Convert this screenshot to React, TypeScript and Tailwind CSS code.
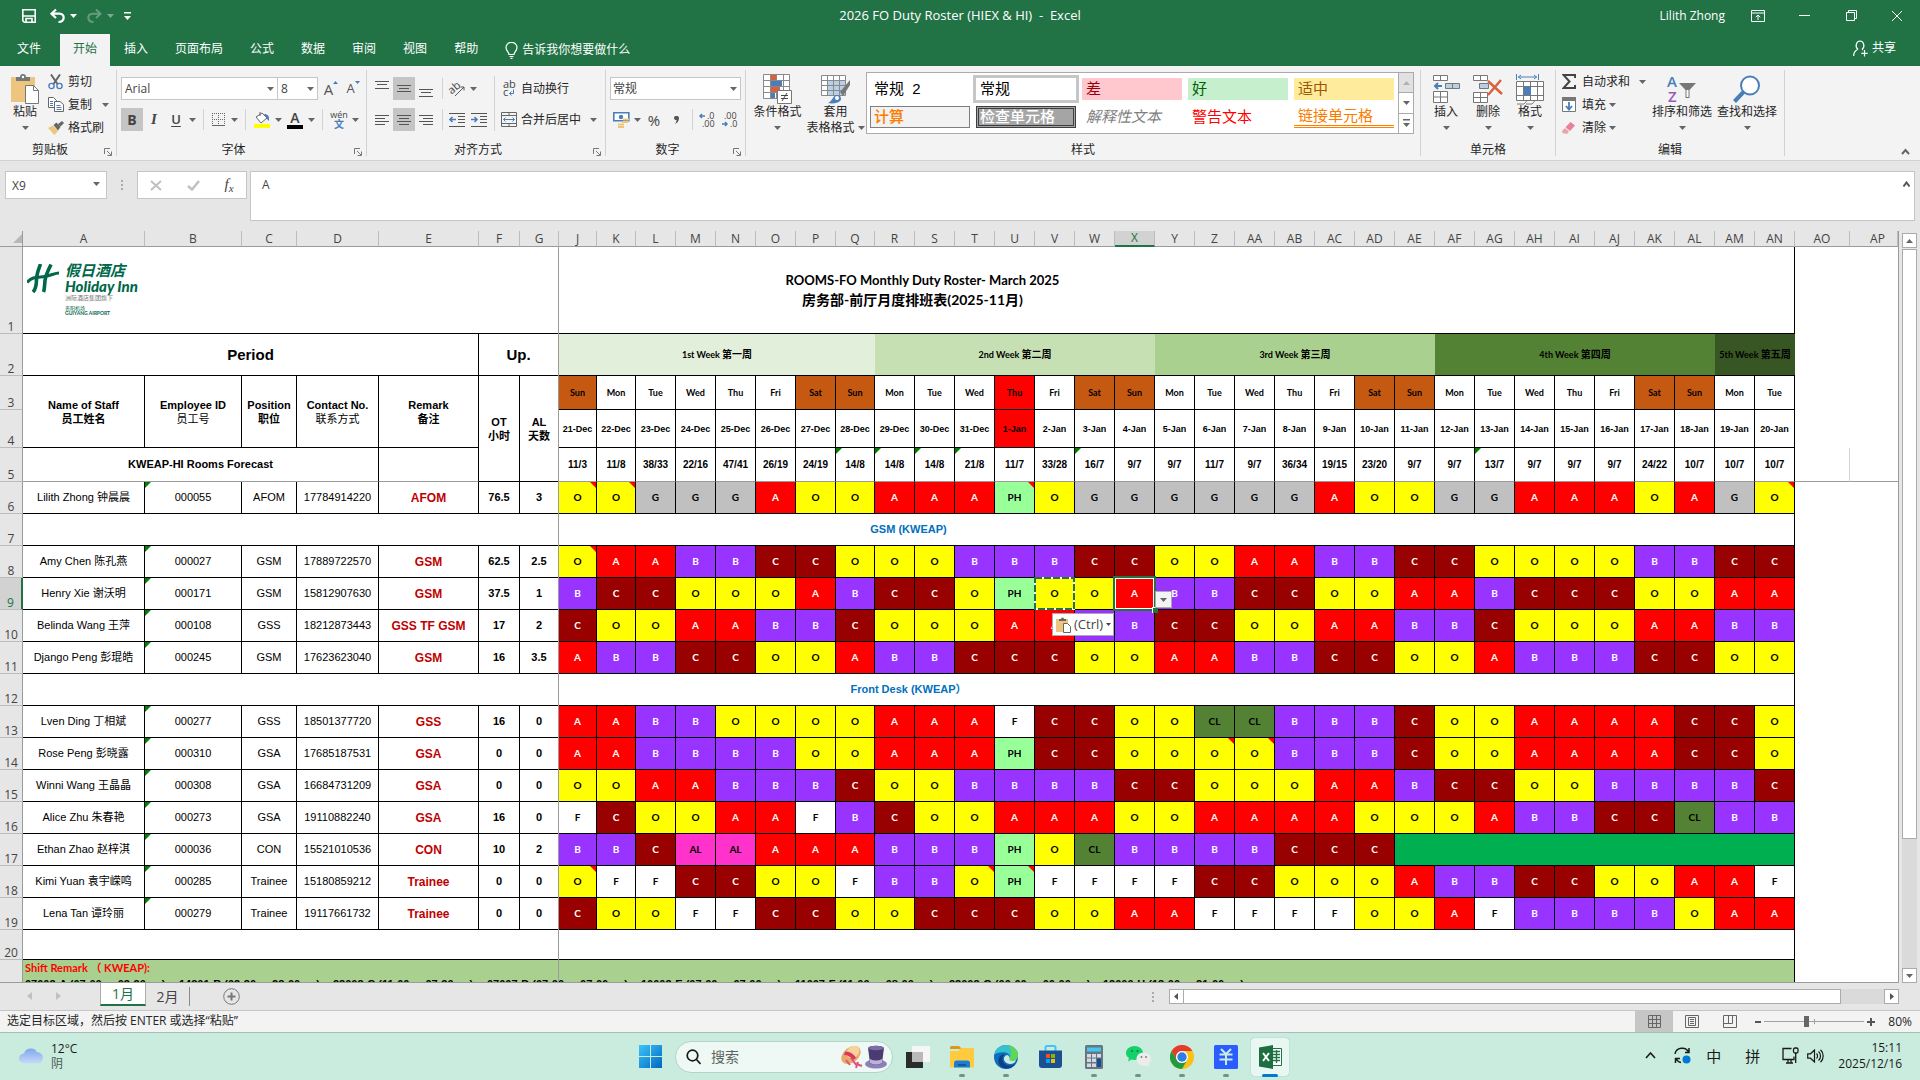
import { useState } from "react";
import type { ReactNode } from "react";
import clsx from "clsx";

const SHIFT_STYLES: Record<string, string> = {
    A: "bg-[#ff0000] text-white",
    B: "bg-[#9933ff] text-white",
    C: "bg-[#990000] text-white",
    O: "bg-[#ffff00] text-black",
    G: "bg-[#c0c0c0] text-black",
    F: "bg-white text-black",
    PH: "bg-[#99ff99] text-black",
    AL: "bg-[#ff33cc] text-black",
    CL: "bg-[#548235] text-black",
};

const LETTERS = "A B C D E F G J K L M N O P Q R S T U V W X Y Z AA AB AC AD AE AF AG AH AI AJ AK AL AM AN AO AP".split(" ");
const DAY_COLUMNS = LETTERS.slice(7, 38);

const STAFF_COLUMN_WIDTHS = ["w-[122px]", "w-[97px]", "w-[55px]", "w-[82px]", "w-[100px]", "w-[41px]", "w-[39px]"];

const WEEKDAYS = ["Sun", "Mon", "Tue", "Wed", "Thu", "Fri", "Sat"];

const WEEKS = [
    { en: "1st Week", zh: "第一周", span: 8, color: "bg-[#e2efda]" },
    { en: "2nd Week", zh: "第二周", span: 7, color: "bg-[#c6e0b4]" },
    { en: "3rd Week", zh: "第三周", span: 7, color: "bg-[#a9d08e]" },
    { en: "4th Week", zh: "第四周", span: 7, color: "bg-[#548235]" },
    { en: "5th Week", zh: "第五周", span: 2, color: "bg-[#375623]" },
];

const FORECAST =
    "11/3 11/8 38/33 22/16 47/41 26/19 24/19 14/8 14/8 14/8 21/8 11/7 33/28 16/7 9/7 9/7 11/7 9/7 36/34 19/15 23/20 9/7 9/7 13/7 9/7 9/7 9/7 24/22 10/7 10/7 10/7".split(" ");
const FORECAST_FLAGS = ["Q", "R", "S", "T", "W", "AG"];

interface Staff {
    row: number;
    name: string;
    id: string;
    position: string;
    phone: string;
    remark: string;
    ot: string;
    al: string;
    shifts: string;
    notes?: string[];
}

const MANAGER: Staff[] = [
    { row: 6, name: "Lilith Zhong 钟晨晨", id: "000055", position: "AFOM", phone: "17784914220", remark: "AFOM", ot: "76.5", al: "3", shifts: "O O G G G A O O A A A PH O G G G G G G A O O G G A A A O A G O", notes: ["J", "K", "U", "AN"] },
];

const GSM_TEAM: Staff[] = [
    { row: 8, name: "Amy Chen 陈孔燕", id: "000027", position: "GSM", phone: "17889722570", remark: "GSM", ot: "62.5", al: "2.5", shifts: "O A A B B C C O O O B B B C C O O A A B B C C O O O O B B C C", notes: ["J"] },
    { row: 9, name: "Henry Xie 谢沃明", id: "000171", position: "GSM", phone: "15812907630", remark: "GSM", ot: "37.5", al: "1", shifts: "B C C O O O A B C C O PH O O A B B C C O O A A B C C C O O A A" },
    { row: 10, name: "Belinda Wang 王萍", id: "000108", position: "GSS", phone: "18212873443", remark: "GSS TF GSM", ot: "17", al: "2", shifts: "C O O A A B B C O O O A A B B C C O O A A B B C O O O A A B B" },
    { row: 11, name: "Django Peng 彭琨皓", id: "000245", position: "GSM", phone: "17623623040", remark: "GSM", ot: "16", al: "3.5", shifts: "A B B C C O O A B B C C C O O A A B B C C O O A B B B C C O O" },
];

const FRONT_DESK: Staff[] = [
    { row: 13, name: "Lven Ding 丁相斌", id: "000277", position: "GSS", phone: "18501377720", remark: "GSS", ot: "16", al: "0", shifts: "A A B B O O O O A A A F C C O O CL CL B B B C O O A A A A C C O" },
    { row: 14, name: "Rose Peng 彭晓露", id: "000310", position: "GSA", phone: "17685187531", remark: "GSA", ot: "0", al: "0", shifts: "A A B B B B O O A A A PH C C O O O O B B B C O O A A A A C C O", notes: ["Z", "AA"] },
    { row: 15, name: "Winni Wang 王晶晶", id: "000308", position: "GSA", phone: "16684731209", remark: "GSA", ot: "0", al: "0", shifts: "O O A A B B B C O O B B B B C C O O O A A B C C O O B B B B C" },
    { row: 16, name: "Alice Zhu 朱春艳", id: "000273", position: "GSA", phone: "19110882240", remark: "GSA", ot: "16", al: "0", shifts: "F C O O A A F B C O O A A A O O A A A A O O O A B B C C CL B B" },
    { row: 17, name: "Ethan Zhao 赵梓淇", id: "000036", position: "CON", phone: "15521010536", remark: "CON", ot: "10", al: "2", shifts: "B B C AL AL A A A B B B PH O CL B B B B C C C" },
    { row: 18, name: "Kimi Yuan 袁宇嵘鸣", id: "000285", position: "Trainee", phone: "15180859212", remark: "Trainee", ot: "0", al: "0", shifts: "O F F C C O O F B B O PH F F F F C C O O O A B B C C O O A A F", notes: ["J", "T", "U"] },
    { row: 19, name: "Lena Tan 谭玲丽", id: "000279", position: "Trainee", phone: "19117661732", remark: "Trainee", ot: "0", al: "0", shifts: "C O O F F C C O O C C C O O A A F F F F O O A F B B B B O A A" },
];

const SHIFT_CODES = [
    ["07003-A (07:00", "03:30", ");"],
    ["14301-B (03:30", "23:00", "),"],
    ["23003-C (11:00", "07:30", "),"],
    ["07007-D (07:00", "07:00", "),"],
    ["10003-E (07:00", "07:00", "),"],
    ["11007-F (11:00", "08:00", "),"],
    ["23003-G (00:00", "06:00", "),"],
    ["12000-H (13:00", "21:00", "),"],
];

/* ---------- small shared pieces ---------- */

const Caret = ({ className = "text-[#666666]" }: { className?: string }) => (
    <svg width="7" height="4" viewBox="0 0 7 4" className={clsx("shrink-0", className)}>
        <path d="M0 0h7L3.5 4z" fill="currentColor" />
    </svg>
);

const CaretButton = ({ label }: { label: string }) => (
    <button aria-label={label} className="flex h-full w-[11px] shrink-0 items-center justify-center">
        <Caret />
    </button>
);

const IconButton = ({ label, active, children }: { label: string; active?: boolean; children: ReactNode }) => (
    <button aria-label={label} className={clsx("flex h-full w-[22px] shrink-0 items-center justify-center", active && "bg-[#c5c5c5]")}>
        {children}
    </button>
);

const Divider = ({ wide }: { wide?: boolean }) => (
    <div className={clsx("ml-[5px] h-[21px] w-px shrink-0 bg-[#d2d2d2]", wide ? "mr-[5px]" : "mr-[3px]")} />
);

const Group = ({ label, width, launcher, children }: { label: string; width: string; launcher?: boolean; children: ReactNode }) => (
    <section aria-label={label} className={clsx("flex shrink-0 flex-col border-r border-[#d2d2d2]", width)}>
        <div className="flex h-[72px] shrink-0 px-1">{children}</div>
        <div className={clsx("relative flex h-4 shrink-0 items-center justify-center", launcher && "pr-4")}>
            <span>{label}</span>
            {launcher && (
                <button aria-label={`${label}设置`} className="absolute right-1 bottom-[2px]">
                    <svg width="8" height="8" viewBox="0 0 8 8" fill="none" stroke="#777777">
                        <path d="M.5 6V.5H6M3 3l4 4M7.5 3.5v4h-4" />
                    </svg>
                </button>
            )}
        </div>
    </section>
);

const BigButton = ({ icon, label, second, width }: { icon: ReactNode; label: string; second?: string; width: string }) => (
    <button className={clsx("flex shrink-0 flex-col items-center pt-1 leading-4 whitespace-nowrap", width)}>
        <span className="flex h-[30px] items-center justify-center">{icon}</span>
        <span>{label}</span>
        <span className="flex h-4 items-center gap-[3px]">
            {second}
            <Caret />
        </span>
    </button>
);

const SmallButton = ({ icon, label, caret }: { icon: ReactNode; label: string; caret?: string }) => (
    <button className="flex h-[23px] items-center whitespace-nowrap">
        <span className="flex w-5 justify-start">{icon}</span>
        {label}
        {caret && (
            <span className={caret}>
                <Caret />
            </span>
        )}
    </button>
);

const AlignLines = ({ rows }: { rows: [number, number, number][] }) => (
    <svg width="16" height="16" viewBox="0 0 16 16" stroke="#555555">
        {rows.map(([x1, x2, y]) => (
            <path key={y} d={`M${x1} ${y}.5H${x2}`} />
        ))}
    </svg>
);

/* ---------- title bar + tabs ---------- */

const TitleBar = () => (
    <div className="grid h-[31px] grid-cols-[1fr_auto_1fr] items-center text-white">
        <div className="flex items-center pl-[21px]">
            <button aria-label="保存">
                <svg width="16" height="16" viewBox="0 0 16 16" fill="none" stroke="white" strokeWidth="1.6">
                    <path d="M1.8 1.8h12.4v12.4H3.3L1.8 12.7zM2 8h12M5 14v-3.500h6v3.500" />
                </svg>
            </button>
            <button aria-label="撤消" className="ml-3">
                <svg width="17" height="16" viewBox="0 0 17 16" fill="none" stroke="white" strokeWidth="2.2">
                    <path d="M7 1.5 2.5 5.7 7 10M3 5.7h7.5c6 0 5.5 8.3-1 8.3" />
                </svg>
            </button>
            <span className="ml-1"><Caret className="text-white" /></span>
            <button aria-label="恢复" className="ml-[9px] opacity-30">
                <svg width="17" height="16" viewBox="0 0 17 16" fill="none" stroke="white" strokeWidth="2">
                    <path d="m10 1.5 4.5 4.2L10 10M14 5.7H6.500c-6 0-5.500 8.300 1 8.300" />
                </svg>
            </button>
            <span className="ml-1 opacity-40"><Caret className="text-white" /></span>
            <button aria-label="自定义快速访问工具栏" className="ml-[10px]">
                <svg width="7" height="8" viewBox="0 0 7 8" fill="white">
                    <path d="M0 0h7v1.500H0zM0 4h7L3.500 8z" />
                </svg>
            </button>
        </div>
        <h1 className="text-[13px] whitespace-pre">{"2026 FO Duty Roster (HIEX & HI)  -  Excel"}</h1>
        <div className="flex items-center justify-end pr-[17px]">
            <span className="mr-[26px]">Lilith Zhong</span>
            <button aria-label="功能区显示选项" className="mr-[34px]">
                <svg width="14" height="12" viewBox="0 0 14 12" fill="none" stroke="white">
                    <path d="M.5.5h13v11H.5zM.5 3h13M7 10V5M4.800 7.200 7 5l2.200 2.200" />
                </svg>
            </button>
            <button aria-label="最小化" className="mr-9">
                <svg width="11" height="11" stroke="white"><path d="M0 5.500h11" /></svg>
            </button>
            <button aria-label="向下还原" className="mr-[34px]">
                <svg width="11" height="11" viewBox="0 0 11 11" fill="none" stroke="white">
                    <path d="M.5 2.500h8v8h-8zM2.500 2.500v-2h8v8h-2" />
                </svg>
            </button>
            <button aria-label="关闭">
                <svg width="12" height="12" viewBox="0 0 12 12" stroke="white"><path d="m1 1 10 10M11 1 1 11" /></svg>
            </button>
        </div>
    </div>
);

const RibbonTabs = () => {
    const tabs = ["插入", "页面布局", "公式", "数据", "审阅", "视图", "帮助"];
    return (
        <nav className="flex h-[35px] items-stretch gap-px pt-[3px] pr-6 text-white">
            <button className="mr-[5px] ml-1 px-[13px] pb-[2px]">文件</button>
            <button className="bg-[#f3f3f3] px-[13px] pb-[2px] text-[#217346]">开始</button>
            {tabs.map((tab) => (
                <button key={tab} className="px-[13px] pb-[2px]">{tab}</button>
            ))}
            <button className="ml-[13px] flex items-center gap-1">
                <svg width="13" height="17" viewBox="0 0 13 17" fill="none" stroke="white" strokeWidth="1.200">
                    <path d="M4 12.500c0-2.500-3-3.500-3-7a5.300 5 0 0 1 11 0c0 3.500-3 4.500-3 7zM4.500 14.500h4M5.500 16.300h2" />
                </svg>
                告诉我你想要做什么
            </button>
            <button className="ml-auto flex items-center gap-1 pb-1">
                <svg width="15" height="17" viewBox="0 0 15 17" fill="none" stroke="white" strokeWidth="1.200">
                    <path d="M7 1a4 4.500 0 0 1 2 8.300M5 9.300A4 4.500 0 0 1 7 1M.7 16c0-3.500 1.500-5.500 4.300-6.700M9 9.300l1 .7M11.500 10v6.500M8.300 13.300h6.400" />
                </svg>
                共享
            </button>
        </nav>
    );
};

/* ---------- ribbon ---------- */

const ClipboardGroup = () => (
    <Group label="剪贴板" width="w-[117px]" launcher>
        <BigButton
            width="w-[42px]"
            label="粘贴"
            icon={
                <svg width="28" height="30" viewBox="0 0 28 30">
                    <path d="M0 3h24v25H0z" fill="#eec57f" />
                    <path d="M5 7V3h4a3 3 0 0 1 6 0h4v4z" fill="#777777" />
                    <circle cx="12" cy="3" r="1.200" fill="white" />
                    <path d="M14.500 11.500h8l5 5v13h-13z" fill="white" stroke="#777777" />
                    <path d="M22.500 11.500v5h5" fill="none" stroke="#777777" />
                </svg>
            }
        />
        <div className="flex flex-col items-start pl-[2px]">
            <SmallButton
                label="剪切"
                icon={
                    <svg width="15" height="16" viewBox="0 0 15 16" fill="none">
                        <path d="M3 0.500 9.500 10M12 .5 5.500 10" stroke="#666666" strokeWidth="2" />
                        <circle cx="3.500" cy="12" r="2.600" stroke="#4a7ebb" strokeWidth="1.400" />
                        <circle cx="11.500" cy="12" r="2.600" stroke="#4a7ebb" strokeWidth="1.400" />
                    </svg>
                }
            />
            <SmallButton
                label="复制"
                caret="ml-[10px]"
                icon={
                    <svg width="16" height="15" viewBox="0 0 16 15" fill="white" stroke="#666666">
                        <path d="M.5.5h5l3 3v7h-8z" />
                        <path d="M6.500 4.500h5.500l3.500 3v7h-9z" />
                        <path d="M2 4.500h3M2 6.500h3M2 8.500h3M8.500 8.500h4M8.500 10.500h5M8.500 12.500h5" stroke="#4a7ebb" />
                    </svg>
                }
            />
            <SmallButton
                label="格式刷"
                icon={
                    <svg width="16" height="14" viewBox="0 0 16 14">
                        <path d="m0 7 5-2.500L10 10l-3.500 4z" fill="#eec57f" />
                        <path d="m5.500 4 3-2.500 4 4.500-2.500 3.500zM10 3l4-3 2 2-3.500 3.500z" fill="#666666" />
                    </svg>
                }
            />
        </div>
    </Group>
);

const FontGroup = () => (
    <Group label="字体" width="w-[250px]" launcher>
        <div className="flex flex-col gap-2 pt-[7px]">
            <div className="flex h-[23px] items-center">
                <div className="relative h-full">
                    <select aria-label="字体" className="h-full w-[157px] appearance-none border border-[#c6c6c6] bg-white pl-[3px] text-[#444444]">
                        <option>Arial</option>
                    </select>
                    <span className="pointer-events-none absolute top-[10px] right-1"><Caret /></span>
                </div>
                <div className="relative mr-[2px] h-full">
                    <select aria-label="字号" className="h-full w-10 appearance-none border border-l-0 border-[#c6c6c6] bg-white pl-[3px] text-[#444444]">
                        <option>8</option>
                    </select>
                    <span className="pointer-events-none absolute top-[10px] right-1"><Caret /></span>
                </div>
                <IconButton label="增大字号">
                    <span className="text-[15px] text-[#555555]">A</span>
                    <svg width="5" height="3" className="mb-3"><path d="M0 3h5L2.500 0z" fill="#4a7ebb" /></svg>
                </IconButton>
                <IconButton label="减小字号">
                    <span className="text-[13px] text-[#555555]">A</span>
                    <svg width="5" height="3" className="mb-3"><path d="M0 0h5L2.500 3z" fill="#4a7ebb" /></svg>
                </IconButton>
            </div>
            <div className="flex h-[23px] items-center text-[#444444]">
                <IconButton label="加粗" active><span className="text-sm font-bold">B</span></IconButton>
                <IconButton label="倾斜"><span className="text-[15px] font-semibold italic [font-family:'Liberation_Serif',serif]">I</span></IconButton>
                <IconButton label="下划线"><span className="text-[13px] font-semibold underline underline-offset-2">U</span></IconButton>
                <CaretButton label="下划线选项" />
                <Divider />
                <IconButton label="边框">
                    <svg width="13" height="13" viewBox="0 0 13 13" stroke="#666666" fill="none">
                        <path d="M0 .5h13M0 6.500h13M.5 0v13M6.500 0v13M12.500 0v13" strokeDasharray="1 1" />
                        <path d="M0 12.500h13" />
                    </svg>
                </IconButton>
                <CaretButton label="边框选项" />
                <Divider wide />
                <IconButton label="填充颜色">
                    <svg width="18" height="17" viewBox="0 0 18 17">
                        <path d="m3 6 6-4 5 5-6 5z" fill="white" stroke="#666666" />
                        <path d="M7 5V1" stroke="#666666" />
                        <path d="M11 3c4 0 5.500 2 5 7-2-1-2-3-3-4z" fill="#4a7ebb" />
                        <path d="M1 13h16v4H1z" fill="#ffff00" />
                    </svg>
                </IconButton>
                <CaretButton label="填充颜色选项" />
                <IconButton label="字体颜色">
                    <span className="border-b-4 border-black px-[3px] text-sm leading-[14px] font-semibold">A</span>
                </IconButton>
                <CaretButton label="字体颜色选项" />
                <Divider wide />
                <IconButton label="拼音指南">
                    <span className="flex flex-col items-center">
                        <span className="text-[9px] leading-2">wén</span>
                        <span className="text-[10px] leading-[10px] font-bold text-[#4a7ebb]">文</span>
                    </span>
                </IconButton>
                <CaretButton label="拼音指南选项" />
            </div>
        </div>
    </Group>
);

const Indent = ({ right }: { right?: boolean }) => (
    <svg width="16" height="14" viewBox="0 0 16 14" fill="none" stroke="#555555">
        <path d="M0 .5h16M9 3.500h7M9 6.500h7M9 9.500h7M0 13.500h16" />
        <path d={right ? "M0 6.500h6M3.500 4 6 6.500 3.500 9" : "M1 6.500h6M3.500 4 1 6.500 3.500 9"} stroke="#4a7ebb" strokeWidth="1.600" />
    </svg>
);

const AlignmentGroup = () => (
    <Group label="对齐方式" width="w-[239px]" launcher>
        <div className="flex w-[123px] flex-col gap-2 pt-[7px]">
            <div className="flex h-[23px] items-center">
                <IconButton label="顶端对齐"><AlignLines rows={[[1, 15, 0], [3, 13, 3], [1, 15, 7]]} /></IconButton>
                <IconButton label="垂直居中" active><AlignLines rows={[[1, 15, 4], [3, 13, 7], [1, 15, 10]]} /></IconButton>
                <IconButton label="底端对齐"><AlignLines rows={[[1, 15, 8], [3, 13, 11], [1, 15, 15]]} /></IconButton>
                <Divider />
                <IconButton label="方向">
                    <svg width="17" height="16" viewBox="0 0 17 16" className="overflow-visible">
                        <text x="0" y="11" fontSize="11" fill="#444444" transform="rotate(-40 5 9)">ab</text>
                        <path d="M6 15 15 6M11.500 6H15v3.500" stroke="#555555" fill="none" />
                    </svg>
                </IconButton>
                <CaretButton label="方向选项" />
            </div>
            <div className="flex h-[23px] items-center">
                <IconButton label="左对齐"><AlignLines rows={[[1, 15, 3], [1, 11, 6], [1, 15, 9], [1, 11, 12]]} /></IconButton>
                <IconButton label="居中" active><AlignLines rows={[[1, 15, 3], [3, 13, 6], [1, 15, 9], [3, 13, 12]]} /></IconButton>
                <IconButton label="右对齐"><AlignLines rows={[[1, 15, 3], [5, 15, 6], [1, 15, 9], [5, 15, 12]]} /></IconButton>
                <Divider />
                <IconButton label="减少缩进量"><Indent /></IconButton>
                <IconButton label="增加缩进量"><Indent right /></IconButton>
            </div>
        </div>
        <div className="mt-[6px] flex h-[55px] flex-col gap-2 border-l border-[#d2d2d2] pt-px pl-[6px]">
            <SmallButton
                label="自动换行"
                icon={
                    <svg width="16" height="16" viewBox="0 0 16 16" className="overflow-visible">
                        <text x="2" y="7" fontSize="11" fill="#444444">ab</text>
                        <text x="2" y="15" fontSize="11" fill="#444444">c</text>
                        <path d="M12.500 8.500v4h-4M10.500 10.500l-2 2 2 2" stroke="#4a7ebb" fill="none" />
                    </svg>
                }
            />
            <SmallButton
                label="合并后居中"
                caret="ml-[9px]"
                icon={
                    <svg width="16" height="15" viewBox="0 0 16 15" fill="none" stroke="#666666">
                        <path d="M.5.5h15v14H.5zM.5 3.500h15M.5 11.500h15M8 .5v3M8 11.500v3" />
                        <path d="M2.500 7.500h11M4.500 5.500l-2 2 2 2M11.500 5.500l2 2-2 2" stroke="#4a7ebb" />
                    </svg>
                }
            />
        </div>
    </Group>
);

const Decimals = ({ more }: { more?: boolean }) => (
    <svg width="17" height="16" viewBox="0 0 17 16" fontSize="9" fill="#444444" className="overflow-visible">
        <text x={more ? 8 : 3} y="7">{more ? ".0" : ".00"}</text>
        <text x={more ? 3 : 9} y="15">{more ? ".00" : ".0"}</text>
        <path d={more ? "M6 4H1M3 2 1 4l2 2" : "M1 12h5M4 10l2 2-2 2"} stroke="#4a7ebb" strokeWidth="1.500" fill="none" />
    </svg>
);

const NumberGroup = () => (
    <Group label="数字" width="w-[140px]" launcher>
        <div className="flex flex-col gap-2 pt-[7px]">
            <div className="relative h-[23px]">
                <select aria-label="数字格式" className="h-full w-[131px] appearance-none border border-[#c6c6c6] bg-white pl-[2px] text-[#444444]">
                    <option>常规</option>
                </select>
                <span className="pointer-events-none absolute top-[10px] right-1"><Caret /></span>
            </div>
            <div className="flex h-[23px] items-center">
                <IconButton label="会计数字格式">
                    <svg width="17" height="16" viewBox="0 0 17 16">
                        <path d="M.8.8h15v8H.8z" fill="white" stroke="#4a7ebb" strokeWidth="1.600" />
                        <circle cx="8" cy="5" r="2.200" fill="#4a7ebb" />
                        <path d="M10 7.500h6M9 10h6M5 12.500h6M5 15h6" stroke="#eec57f" strokeWidth="1.800" />
                    </svg>
                </IconButton>
                <CaretButton label="会计数字格式选项" />
                <IconButton label="百分比样式"><span className="text-[15px] text-[#444444]">%</span></IconButton>
                <IconButton label="千位分隔样式">
                    <svg width="5" height="8" viewBox="0 0 5 8"><path d="M0 2a2.300 2 0 0 1 5 0c0 3-1.500 5-4 6 1-1.500 1.500-2.500 1.500-4C1 4 0 3.500 0 2" fill="#555555" /></svg>
                </IconButton>
                <Divider />
                <IconButton label="增加小数位数"><Decimals more /></IconButton>
                <IconButton label="减少小数位数"><Decimals /></IconButton>
            </div>
        </div>
    </Group>
);

const StylesGroup = () => (
    <Group label="样式" width="w-[675px]">
        <BigButton
            width="w-[55px]"
            label="条件格式"
            icon={
                <svg width="29" height="30" viewBox="0 0 29 30">
                    <path d="M.5.5h26v24H.5zM.5 6.500h26M.5 12.500h26M.5 18.500h26M7.500.5v24M13.500.5v24M20.500.5v24" fill="white" stroke="#8a8a8a" />
                    <path d="M8 1h5v5H8zM8 13h9v5H8z" fill="#d9603b" />
                    <path d="M8 7h11v5H8zM8 19h4v5H8z" fill="#4a7ebb" />
                    <path d="M14.500 16.500h14v13h-14z" fill="white" stroke="#777777" />
                    <path d="M18 21.500h7M18 24.500h7M24 19l-5 8" stroke="#444444" />
                </svg>
            }
        />
        <BigButton
            width="w-[61px]"
            label="套用"
            second="表格格式"
            icon={
                <svg width="30" height="29" viewBox="0 0 30 29">
                    <path d="M.5.5h24v20H.5z" fill="white" stroke="#8a8a8a" />
                    <path d="M6 6h18v14H6z" fill="#b8cfe6" />
                    <path d="M.5 5.500h24M.5 10.500h24M.5 15.500h24M6.500.5v20M12.500.5v20M18.500.5v20" stroke="#8a8a8a" fill="none" />
                    <path d="m29 5-10 12 3 4 7-11z" fill="#777777" />
                    <path d="M7 28c4-1 5-8 9-8s5 4 3 6-7 3-12 2" fill="#4a7ebb" />
                    <circle cx="16" cy="23" r="2" fill="white" />
                </svg>
            }
        />
        <div className="mt-[2px] flex h-[62px] border border-[#ababab] bg-white text-[15px] [font-family:'Liberation_Sans','Noto_Sans_CJK_SC',sans-serif]">
            <div className="grid grid-cols-[repeat(5,100px)] grid-rows-[22px_22px] gap-[6px] pt-[5px] pr-1 pl-[3px] text-left leading-[18px]">
                <button className="px-1 text-left whitespace-pre text-black">{"常规  2"}</button>
                <button className="bg-white px-1 text-left text-black outline-3 outline-[#c6c6c6]">常规</button>
                <button className="bg-[#ffc7ce] px-1 text-left text-[#9c0006]">差</button>
                <button className="bg-[#c6efce] px-1 text-left text-[#006100]">好</button>
                <button className="bg-[#ffeb9c] px-1 text-left text-[#9c5700]">适中</button>
                <button className="border border-[#7f7f7f] bg-[#f2f2f2] px-[3px] text-left font-medium text-[#fa7d00]">计算</button>
                <button className="border-3 border-double border-[#3f3f3f] bg-[#a5a5a5] px-px text-left leading-4 font-medium text-white">检查单元格</button>
                <button className="px-1 text-left text-[#7f7f7f] italic">解释性文本</button>
                <button className="px-1 text-left text-[#ff0000]">警告文本</button>
                <button className="border-b-3 border-double border-[#ff8001] px-1 text-left text-[#fa7d00]">链接单元格</button>
            </div>
            <div className="flex w-[15px] flex-col border-l border-[#ababab]">
                <button aria-label="上一行" className="flex flex-1 items-center justify-center bg-[#e1e1e1]">
                    <svg width="7" height="4"><path d="M0 4h7L3.500 0z" fill="#b0b0b0" /></svg>
                </button>
                <button aria-label="下一行" className="flex flex-1 items-center justify-center border-y border-[#ababab]"><Caret /></button>
                <button aria-label="其他样式" className="flex flex-1 items-center justify-center">
                    <svg width="7" height="8" viewBox="0 0 7 8" fill="#666666"><path d="M0 0h7v1.500H0zM0 4h7L3.500 8z" /></svg>
                </button>
            </div>
        </div>
    </Group>
);

const CellsGroup = () => (
    <Group label="单元格" width="w-[135px]">
        <BigButton
            width="w-[42px]"
            label="插入"
            icon={
                <svg width="27" height="28" viewBox="0 0 27 28" fill="white" stroke="#777777">
                    <path d="M.5.5h14v5H.5zM7.500.5v5M.5 16.500h14v11H.5zM7.500 16.500v11M.5 22h14" />
                    <path d="M12.500 8.500h14v5h-14zM19.500 8.500v5" fill="#b8cfe6" />
                    <path d="M9 11H2M5 8l-3 3 3 3" stroke="#4a7ebb" strokeWidth="2" fill="none" />
                </svg>
            }
        />
        <BigButton
            width="w-[42px]"
            label="删除"
            icon={
                <svg width="30" height="28" viewBox="0 0 30 28" fill="white" stroke="#777777">
                    <path d="M.5.5h14v5H.5zM7.500.5v5M.5 17.500h14v10H.5zM7.500 17.500v10M.5 22.500h14" />
                    <path d="M6.500 8.500h9v5h-9z" fill="#b8cfe6" />
                    <path d="m15 6 14 13M28 5 15 20" stroke="#d9603b" strokeWidth="2.400" />
                </svg>
            }
        />
        <BigButton
            width="w-[42px]"
            label="格式"
            icon={
                <svg width="28" height="31" viewBox="0 0 28 31" fill="white" stroke="#777777">
                    <path d="M.5 7.500h27v19H.5zM.5 12.500h27M.5 21.500h27M7.500 7.500v19M14.500 7.500v19M21.500 7.500v19M1 30h7l3-3.500M10 30h6l3-3.500" />
                    <path d="M8 13h7v8H8z" fill="#4a7ebb" stroke="none" />
                    <path d="M.5 0v6M22.500 0v6M2 3h19M5 1 2.500 3 5 5M18 1l2.500 2L18 5" stroke="#4a7ebb" fill="none" />
                </svg>
            }
        />
    </Group>
);

const EditingGroup = () => (
    <Group label="编辑" width="w-[229px]">
        <div className="flex w-[90px] flex-col items-start pl-[2px]">
            <SmallButton
                label="自动求和"
                caret="ml-[9px]"
                icon={<svg width="14" height="15" viewBox="0 0 14 15" fill="none" stroke="#444444" strokeWidth="2"><path d="M13 4V1H1.500l6 6.500-6 6.500H13v-3" /></svg>}
            />
            <SmallButton
                label="填充"
                caret="ml-[3px]"
                icon={
                    <svg width="14" height="15" viewBox="0 0 14 15" fill="white" stroke="#777777">
                        <path d="M.5.5h13v14H.5z" />
                        <path d="M0 0h14v4H0z" fill="#777777" stroke="none" />
                        <path d="M7 5v7M4 9l3 3.500L10 9" stroke="#4a7ebb" strokeWidth="1.800" fill="none" />
                    </svg>
                }
            />
            <SmallButton
                label="清除"
                caret="ml-[3px]"
                icon={
                    <svg width="13" height="12" viewBox="0 0 13 12">
                        <path d="M8.500 0 13 3.500 8 9 3.500 5.200z" fill="#e8829a" />
                        <path d="M3 6 7 9.500 5 12 .5 11 0 9z" fill="#eda0b0" />
                    </svg>
                }
            />
        </div>
        <BigButton
            width="w-[64px]"
            label="排序和筛选"
            icon={
                <svg width="30" height="28" viewBox="0 0 30 28" fontSize="15" fontWeight="600" className="overflow-visible">
                    <text x="0" y="12" fill="#4a7ebb">A</text>
                    <text x="1" y="27" fill="#9b59b6">Z</text>
                    <path d="M12 8h17l-6.500 7v8h-4v-8z" fill="#777777" />
                    <path d="M19.500 15v7h2v-7z" fill="white" />
                </svg>
            }
        />
        <BigButton
            width="w-[66px]"
            label="查找和选择"
            icon={
                <svg width="28" height="28" viewBox="0 0 28 28" fill="none" stroke="#4a7ebb">
                    <circle cx="17" cy="10.500" r="9" fill="white" strokeWidth="2" />
                    <path d="m10.500 17-9 9.500" strokeWidth="4" />
                </svg>
            }
        />
    </Group>
);

const Ribbon = () => (
    <div className="flex h-[95px] shrink-0 overflow-hidden border-b border-[#d2d2d2] bg-[#f3f3f3] py-1 text-[#262626]">
        <ClipboardGroup />
        <FontGroup />
        <AlignmentGroup />
        <NumberGroup />
        <StylesGroup />
        <CellsGroup />
        <EditingGroup />
        <button aria-label="折叠功能区" className="mr-[10px] ml-auto self-end">
            <svg width="9" height="8" viewBox="0 0 9 8" fill="none" stroke="#666666" strokeWidth="2"><path d="m1 6 3.500-4L8 6" /></svg>
        </button>
    </div>
);

/* ---------- formula bar ---------- */

const FormulaBar = () => {
    const [formula, setFormula] = useState("A");
    return (
        <div className="flex h-[70px] shrink-0 items-start bg-[#e6e6e6] pt-[10px] pr-[5px] pl-[5px]">
            <div className="relative">
                <input aria-label="名称框" defaultValue="X9" className="h-7 w-[102px] border border-[#c6c6c6] bg-white pl-[6px] text-[#444444] outline-none" />
                <span className="pointer-events-none absolute top-[11px] right-[7px]"><Caret /></span>
            </div>
            <div className="mx-[14px] flex h-7 flex-col justify-center gap-[2px]">
                <i className="size-[2px] bg-[#ababab]" />
                <i className="size-[2px] bg-[#ababab]" />
                <i className="size-[2px] bg-[#ababab]" />
            </div>
            <div className="mr-[3px] flex h-7 w-[110px] items-center justify-around border border-[#c6c6c6] bg-white">
                <button aria-label="取消">
                    <svg width="12" height="11" stroke="#c0c0c0" strokeWidth="2"><path d="m1 1 10 9M11 1 1 10" /></svg>
                </button>
                <button aria-label="输入">
                    <svg width="13" height="11" fill="none" stroke="#c0c0c0" strokeWidth="2.400"><path d="m1 6 4 3.500L12 1" /></svg>
                </button>
                <button aria-label="插入函数" className="text-[15px] text-[#444444] italic [font-family:'Liberation_Serif',serif]">
                    f<sub className="text-[11px]">x</sub>
                </button>
            </div>
            <div className="relative flex flex-1">
                <textarea
                    aria-label="编辑栏"
                    value={formula}
                    onChange={(e) => setFormula(e.target.value)}
                    className="h-[50px] w-full resize-none border border-[#c6c6c6] bg-white px-[11px] pt-[5px] text-[#444444] outline-none"
                />
                <button aria-label="折叠编辑栏" className="absolute top-[10px] right-[5px]">
                    <svg width="7" height="7" fill="none" stroke="#555555" strokeWidth="2"><path d="m.5 5.500 3-4 3 4" /></svg>
                </button>
            </div>
        </div>
    );
};

/* ---------- worksheet ---------- */

const RowHead = ({ n, active }: { n?: number; active?: boolean }) => (
    <th
        scope="row"
        className={clsx(
            "border-b border-b-[#bcbcbc] p-0 text-center align-bottom text-xs leading-[13px] font-normal [font-family:'Open_Sans',sans-serif]",
            active ? "border-r-2 border-r-[#217346] bg-[#d2d2d2] text-[#217346]" : "border-r border-r-[#9b9b9b] bg-[#e6e6e6] text-[#444444]"
        )}
    >
        {n}
    </th>
);

const Blank = () => <td colSpan={2} />;

const ErrorFlag = () => (
    <svg width="6" height="6" className="absolute top-0 left-0"><path d="M0 0h6L0 6z" fill="#008000" /></svg>
);

const NoteFlag = () => (
    <svg width="6" height="6" className="absolute top-0 right-0"><path d="M0 0h6v6z" fill="#ff0000" /></svg>
);

const PasteOptions = () => (
    <button className="absolute top-[35px] left-[17px] z-20 flex h-[23px] w-[62px] items-center gap-[3px] border border-[#ababab] bg-white pl-[3px] text-[13px] font-normal text-[#444444] [font-family:'Open_Sans',sans-serif]">
        <svg width="15" height="16" viewBox="0 0 15 16" className="shrink-0">
            <path d="M0 2h12v13H0z" fill="#eec57f" />
            <path d="M3 4V2h2a1.500 1.500 0 0 1 3 0h2v2z" fill="#666666" />
            <path d="M7.500 6.500h4l3 3v6h-7z" fill="white" stroke="#666666" />
        </svg>
        (Ctrl)
        <svg width="5" height="3" className="shrink-0"><path d="M0 0h5L2.500 3z" fill="#444444" /></svg>
    </button>
);

// dashed outline round the copied cell
const CopyOutline = () => (
    <svg width="41" height="33" className="absolute -top-px -left-px" fill="none" strokeWidth="2">
        <rect x="1" y="1" width="39" height="31" stroke="white" />
        <rect x="1" y="1" width="39" height="31" stroke="#217346" strokeDasharray="7 2" />
    </svg>
);

const ShiftCell = ({ code, column, row, note }: { code: string; column: string; row: number; note?: boolean }) => {
    const selected = row === 9 && column === "X";
    const copied = row === 9 && column === "V";
    return (
        <td className={clsx("relative border-r border-b border-black p-0 text-[10px] font-bold [font-family:'Lato',sans-serif]", SHIFT_STYLES[code])}>
            {code}
            {note && <NoteFlag />}
            {copied && (
                <>
                    <CopyOutline />
                    <PasteOptions />
                </>
            )}
            {selected && (
                <>
                    <span className="absolute -inset-[2px] z-10 border-2 border-[#217346] shadow-[inset_0_0_0_1px_white]" />
                    <span className="absolute -right-1 -bottom-1 z-10 size-[6px] border-t border-l border-white bg-[#217346]" />
                    <button aria-label="选择班次" className="absolute top-[13px] left-10 z-10 flex size-[17px] items-center justify-center border border-[#ababab] bg-[#f3f3f3]">
                        <Caret />
                    </button>
                </>
            )}
        </td>
    );
};

const StaffRow = ({ staff }: { staff: Staff }) => {
    const shifts = staff.shifts.split(" ");
    const cell = "border-r border-b border-black p-0 whitespace-nowrap";
    return (
        <tr className="h-8">
            <RowHead n={staff.row} active={staff.row === 9} />
            <td className={cell}>{staff.name}</td>
            <td className={clsx(cell, "relative")}>
                <ErrorFlag />
                {staff.id}
            </td>
            <td className={cell}>{staff.position}</td>
            <td className={cell}>{staff.phone}</td>
            <td className={clsx(cell, "text-xs font-bold text-[#c00000]")}>{staff.remark}</td>
            <td className={clsx(cell, "font-bold")}>{staff.ot}</td>
            <td className={clsx(cell, "font-bold")}>{staff.al}</td>
            {shifts.map((code, i) => (
                <ShiftCell key={DAY_COLUMNS[i]} code={code} column={DAY_COLUMNS[i]} row={staff.row} note={staff.notes?.includes(DAY_COLUMNS[i])} />
            ))}
            {shifts.length < DAY_COLUMNS.length && (
                <td colSpan={DAY_COLUMNS.length - shifts.length} className="border-r border-b border-black bg-[#00b050]" />
            )}
            <Blank />
        </tr>
    );
};

const SectionRow = ({ n, title, height }: { n: number; title?: string; height: string }) => (
    <tr className={height}>
        <RowHead n={n} />
        <td colSpan={38} className="border-r border-b border-black p-0 font-bold text-[#0070c0]">{title}</td>
        <Blank />
    </tr>
);

const HotelLogo = () => (
    <div className="absolute top-[15px] left-1 flex gap-[6px] text-left font-bold whitespace-nowrap text-[#00684a]">
        <svg width="32" height="29" viewBox="0 0 32 29" className="mt-[2px]" fill="none" stroke="#00684a">
            <path d="M13.500 0c-1 3-4 10-4 15S9 25 6 28" strokeWidth="3.600" />
            <path d="M24 .5c-3 6-5.500 11-6 16s-.5 9-1.500 11.500" strokeWidth="3.600" />
            <path d="M0 18.500C5 12 12 13.500 18 12.500S28 9 32 9" strokeWidth="3" />
        </svg>
        <div>
            <div className="text-[15px] leading-4 italic">假日酒店</div>
            <div className="text-[15px] leading-4 font-black italic [font-family:'Lato',sans-serif]">Holiday Inn</div>
            <div className="text-[6px] leading-2 font-normal text-[#777777]">洲际酒店集团旗下</div>
            <div className="mt-[3px] text-[5px] leading-[6px] font-normal">贵阳机场</div>
            <div className="text-[5px] leading-[5px]">GUIYANG AIRPORT</div>
        </div>
    </div>
);

const dayLabel = (i: number) => (i < 11 ? `${21 + i}-Dec` : `${i - 10}-Jan`);

const dayColor = (i: number, rowOfNames: boolean) => {
    if (i === 11) return "bg-[#ff0000]";
    return rowOfNames && (i % 7 === 0 || i % 7 === 6) ? "bg-[#c65911]" : "bg-white";
};

const HeaderCell = ({ en, zh, rowSpan, light }: { en: string; zh: string; rowSpan: number; light?: boolean }) => (
    <th rowSpan={rowSpan} className="border-r border-b border-black p-0 leading-[14px] whitespace-nowrap">
        {en}
        <br />
        <span className={clsx(light && "font-normal")}>{zh}</span>
    </th>
);

const Worksheet = () => (
    <div className="relative min-w-0 flex-1 overflow-hidden border-r border-b border-[#9b9b9b] bg-white">
        <table className="w-full table-fixed border-separate border-spacing-0 text-center text-[11px] text-black [font-family:'Liberation_Sans','Noto_Sans_CJK_SC',sans-serif]">
            <colgroup>
                <col className="w-[23px]" />
                {STAFF_COLUMN_WIDTHS.map((width, i) => (
                    <col key={i} className={width} />
                ))}
                {DAY_COLUMNS.map((letter) => (
                    <col key={letter} className={clsx(letter === "J" ? "w-[38px]" : letter === "K" || letter === "Q" ? "w-[39px]" : "w-10")} />
                ))}
                <col className="w-[55px]" />
                <col />
            </colgroup>
            <thead>
                <tr className="h-4 bg-[#e6e6e6] text-xs leading-[14px] text-[#444444] [font-family:'Open_Sans',sans-serif]">
                    <td className="border-r border-b border-[#9b9b9b] p-0">
                        <svg width="9" height="9" className="ml-auto"><path d="M9 0v9H0z" fill="#b8b8b8" /></svg>
                    </td>
                    {LETTERS.map((letter) => (
                        <th
                            key={letter}
                            scope="col"
                            className={clsx(
                                "border-r border-r-[#bcbcbc] py-0 pr-0 font-normal",
                                letter === "AP" ? "pl-2" : "pl-0",
                                letter === "X" ? "border-b-2 border-b-[#217346] bg-[#d2d2d2] text-[#217346]" : "border-b border-b-[#9b9b9b]"
                            )}
                        >
                            {letter}
                        </th>
                    ))}
                </tr>
            </thead>
            <tbody>
                <tr className="h-[87px]">
                    <RowHead n={1} />
                    <td colSpan={38} className="relative border-r border-b border-black p-0 leading-5 font-bold [font-family:'Lato','Noto_Sans_CJK_SC',sans-serif]">
                        <HotelLogo />
                        <div className="pl-7 text-[13px]">ROOMS-FO Monthly Duty Roster- March 2025</div>
                        <div className="pl-2 text-sm">房务部-前厅月度排班表(2025-11月)</div>
                    </td>
                    <Blank />
                </tr>
                <tr className="h-[42px]">
                    <RowHead n={2} />
                    <th colSpan={5} className="border-r border-b border-black p-0 text-[15px]">Period</th>
                    <th colSpan={2} className="border-r border-b border-black p-0 text-[15px]">Up.</th>
                    {WEEKS.map((week) => (
                        <th key={week.en} colSpan={week.span} className={clsx("border-b border-black p-0 text-[9px] leading-3 whitespace-nowrap [font-family:'Lato','Noto_Sans_CJK_SC',sans-serif]", week.color)}>
                            {week.en} <span className="text-[10px]">{week.zh}</span>
                        </th>
                    ))}
                    <Blank />
                </tr>
                <tr className="h-[34px]">
                    <RowHead n={3} />
                    <HeaderCell en="Name of Staff" zh="员工姓名" rowSpan={2} />
                    <HeaderCell en="Employee ID" zh="员工号" rowSpan={2} light />
                    <HeaderCell en="Position" zh="职位" rowSpan={2} />
                    <HeaderCell en="Contact No." zh="联系方式" rowSpan={2} light />
                    <HeaderCell en="Remark" zh="备注" rowSpan={2} />
                    <HeaderCell en="OT" zh="小时" rowSpan={3} />
                    <HeaderCell en="AL" zh="天数" rowSpan={3} />
                    {DAY_COLUMNS.map((letter, i) => (
                        <th key={letter} className={clsx("border-r border-b border-black p-0 text-[9px] [font-family:'Lato',sans-serif]", dayColor(i, true))}>
                            {WEEKDAYS[i % 7]}
                        </th>
                    ))}
                    <Blank />
                </tr>
                <tr className="h-[38px]">
                    <RowHead n={4} />
                    {DAY_COLUMNS.map((letter, i) => (
                        <th key={letter} className={clsx("border-r border-b border-black p-0 text-[9px] whitespace-nowrap", dayColor(i, false))}>
                            {dayLabel(i)}
                        </th>
                    ))}
                    <Blank />
                </tr>
                <tr className="h-[34px]">
                    <RowHead n={5} />
                    <th colSpan={4} className="border-r border-b border-r-black border-b-[#9b9b9b] p-0">KWEAP-HI Rooms Forecast</th>
                    <td className="border-r border-b border-r-black border-b-[#9b9b9b]" />
                    {FORECAST.map((value, i) => (
                        <td key={DAY_COLUMNS[i]} className="relative border-r border-b border-r-black border-b-[#9b9b9b] p-0 text-[10px] font-bold">
                            {FORECAST_FLAGS.includes(DAY_COLUMNS[i]) && <ErrorFlag />}
                            {value}
                        </td>
                    ))}
                    <td className="border-r border-b border-r-[#d4d4d4] border-b-[#9b9b9b]" />
                    <td className="border-b border-[#9b9b9b]" />
                </tr>
                {MANAGER.map((staff) => <StaffRow key={staff.id} staff={staff} />)}
                <SectionRow n={7} title="GSM (KWEAP)" height="h-8" />
                {GSM_TEAM.map((staff) => <StaffRow key={staff.id} staff={staff} />)}
                <SectionRow n={12} title="Front Desk (KWEAP）" height="h-8" />
                {FRONT_DESK.map((staff) => <StaffRow key={staff.id} staff={staff} />)}
                <SectionRow n={20} height="h-[30px]" />
                <tr className="h-[90px]">
                    <RowHead />
                    <td colSpan={38} className="border-r border-black bg-[#a9d08e] p-0 pl-[2px] text-left align-top leading-4 font-bold whitespace-nowrap">
                        <div className="whitespace-pre text-[#ff0000] [font-family:'Lato','Noto_Sans_CJK_SC',sans-serif]">{"Shift Remark （ KWEAP):"}</div>
                        <div className="flex">
                            {SHIFT_CODES.map((parts) => (
                                <span key={parts[0]} className="flex w-[154px] shrink-0 gap-4">
                                    {parts.map((part) => <span key={part}>{part}</span>)}
                                </span>
                            ))}
                        </div>
                    </td>
                    <Blank />
                </tr>
            </tbody>
        </table>
        {/* frozen pane edge */}
        <div className="absolute top-4 bottom-0 left-[558px] w-px bg-[#9b9b9b]" />
    </div>
);

const VerticalScroll = () => (
    <div className="flex w-[21px] shrink-0 flex-col bg-[#e6e6e6] pt-[2px] pr-[3px] pl-[3px]">
        <button aria-label="向上滚动" className="flex h-[15px] items-center justify-center border border-[#ababab] bg-white">
            <svg width="7" height="4"><path d="M0 4h7L3.500 0z" fill="#666666" /></svg>
        </button>
        <div className="mt-px flex flex-1 flex-col bg-[#dadada]">
            <div className="basis-[82%] border border-[#ababab] bg-white" />
        </div>
        <button aria-label="向下滚动" className="flex h-[15px] items-center justify-center border border-[#ababab] bg-white">
            <Caret />
        </button>
    </div>
);

const SheetTabs = () => (
    <div className="flex h-7 shrink-0 border-b border-[#c6c6c6] bg-[#e6e6e6] pr-[21px]">
        <div className="flex flex-1">
            <div className="flex w-[100px] items-center gap-6 pb-[2px] pl-[27px]">
                <button aria-label="上一张工作表"><svg width="5" height="8"><path d="M5 0v8L0 4z" fill="#c0c0c0" /></svg></button>
                <button aria-label="下一张工作表"><svg width="5" height="8"><path d="M0 0v8l5-4z" fill="#c0c0c0" /></svg></button>
            </div>
            <button className="mb-1 w-[46px] border-x border-b-2 border-x-[#ababab] border-b-[#217346] bg-white text-sm leading-5 text-[#217346]">1月</button>
            <button className="mt-1 mb-1 w-11 border-r border-[#8a8a8a] pb-1 text-sm leading-5 text-[#444444]">2月</button>
            <button aria-label="新工作表" className="ml-[33px]">
                <svg width="17" height="17" viewBox="0 0 17 17" fill="none" stroke="#777777">
                    <circle cx="8.500" cy="8.500" r="7.800" />
                    <path d="M8.500 4.500v8M4.500 8.500h8" strokeWidth="2" />
                </svg>
            </button>
        </div>
        <div className="mr-[15px] flex flex-col justify-center gap-[2px]">
            <i className="size-[2px] bg-[#ababab]" />
            <i className="size-[2px] bg-[#ababab]" />
            <i className="size-[2px] bg-[#ababab]" />
        </div>
        <div className="mt-[6px] flex h-[15px] w-5/13 bg-[#dadada]">
            <button aria-label="向左滚动" className="flex w-[15px] items-center justify-center border border-[#ababab] bg-white">
                <svg width="4" height="7"><path d="M4 0v7L0 3.500z" fill="#555555" /></svg>
            </button>
            <div className="basis-[90%] border border-l-0 border-[#ababab] bg-white" />
            <div className="flex-1" />
            <button aria-label="向右滚动" className="flex w-[15px] items-center justify-center border border-[#ababab] bg-white">
                <svg width="4" height="7"><path d="M0 0v7l4-3.500z" fill="#555555" /></svg>
            </button>
        </div>
    </div>
);

const StatusBar = () => {
    const [zoom, setZoom] = useState(80);
    return (
        <div className="flex h-[22px] shrink-0 items-center border-b border-[#a8bdb4] bg-[#f3f3f3] pr-2 pl-[7px] text-[#262626]">
            <span className="flex-1 pb-[2px]">选定目标区域，然后按 ENTER 或选择“粘贴”</span>
            <button aria-label="普通" className="flex h-full w-[38px] items-center justify-center bg-[#c6c6c6]">
                <svg width="13" height="13" viewBox="0 0 13 13" fill="none" stroke="#666666"><path d="M.5.5h12v12H.5zM.5 4.500h12M.5 8.500h12M4.500.5v12M8.500.5v12" /></svg>
            </button>
            <button aria-label="页面布局" className="flex h-full w-[38px] items-center justify-center">
                <svg width="14" height="13" viewBox="0 0 14 13" fill="none" stroke="#666666"><path d="M.5.5h13v12H.5zM3.500 2.500h7v8h-7zM5 4.500h4M5 6.500h4M5 8.500h4" /></svg>
            </button>
            <button aria-label="分页预览" className="flex h-full w-[38px] items-center justify-center">
                <svg width="14" height="13" viewBox="0 0 14 13" fill="none" stroke="#666666"><path d="M.5.5h13v12H.5zM5.500.5v8M9.500.5v8M.5 8.500h9" /></svg>
            </button>
            <button aria-label="缩小" className="mr-[2px] ml-1 flex w-[9px] justify-center"><svg width="6" height="2"><path d="M0 0h6v2H0z" fill="#555555" /></svg></button>
            <div className="relative flex h-full items-center">
                <input
                    type="range"
                    aria-label="显示比例"
                    min={-20}
                    max={220}
                    value={zoom}
                    onChange={(e) => setZoom(Number(e.target.value))}
                    className="h-px w-[100px] appearance-none bg-[#a0a0a0] [&::-webkit-slider-thumb]:h-[11px] [&::-webkit-slider-thumb]:w-[5px] [&::-webkit-slider-thumb]:appearance-none [&::-webkit-slider-thumb]:bg-[#666666]"
                />
                <span className="absolute top-2 left-1/2 h-[5px] w-px bg-[#a0a0a0]" />
            </div>
            <button aria-label="放大" className="ml-[3px]"><svg width="8" height="8" stroke="#555555" strokeWidth="2"><path d="M4 0v8M0 4h8" /></svg></button>
            <span className="ml-3 w-[25px] text-right whitespace-nowrap">{zoom}%</span>
        </div>
    );
};

/* ---------- taskbar ---------- */

const TaskIcon = ({ label, running, active, children }: { label: string; running?: boolean; active?: boolean; children: ReactNode }) => (
    <button aria-label={label} className={clsx("relative mx-[3px] flex h-[38px] w-[38px] items-center justify-center rounded-[4px]", active && "bg-white/60 shadow-[0_0_1px_#7a9a8c]")}>
        {children}
        {running && <span className={clsx("absolute -bottom-px h-[3px] rounded-full", active ? "w-4 bg-[#0078d4]" : "w-[6px] bg-[#7c8f87]")} />}
    </button>
);

const Taskbar = () => (
    <footer className="grid h-[47px] shrink-0 grid-cols-[1fr_auto_1fr] items-center bg-[#c9ecdf] text-[#1a1a1a]">
        <button className="flex items-center gap-[7px] pb-[2px] pl-[19px] text-left">
            <svg width="25" height="17" viewBox="0 0 25 17">
                <defs>
                    <linearGradient id="cloud" x1="0" y1="0" x2="0" y2="1">
                        <stop offset="0" stopColor="#7fa8ee" />
                        <stop offset="1" stopColor="#c5daf8" />
                    </linearGradient>
                </defs>
                <path d="M6 16.500a5.500 5 0 0 1-1-10 7 6.500 0 0 1 13-1.500 6 5.800 0 0 1 1 11.500z" fill="url(#cloud)" />
            </svg>
            <span className="leading-[15px]">
                12°C
                <br />
                <span className="text-[#4a5a54]">阴</span>
            </span>
        </button>
        <div className="flex items-center">
            <TaskIcon label="开始">
                <svg width="23" height="23" viewBox="0 0 23 23">
                    <defs>
                        <linearGradient id="win" x1="0" y1="0" x2="1" y2="1">
                            <stop offset="0" stopColor="#3cc4fb" />
                            <stop offset="1" stopColor="#0067c0" />
                        </linearGradient>
                    </defs>
                    <path d="M0 0h11v11H0zM12 0h11v11H12zM0 12h11v11H0zM12 12h11v11H12z" fill="url(#win)" />
                </svg>
            </TaskIcon>
            <div className="mx-[3px] flex h-8 w-[218px] items-center rounded-full border border-[#b3d4c8] bg-[#eef8f4] pr-1 pl-[10px]">
                <svg width="15" height="16" viewBox="0 0 15 16" fill="none" stroke="#1a1a1a" strokeWidth="1.700"><circle cx="6.500" cy="6.500" r="5.300" /><path d="m10.500 10.500 4 4.500" /></svg>
                <input aria-label="搜索" placeholder="搜索" className="ml-[10px] w-[100px] flex-1 bg-transparent text-sm outline-none placeholder:text-[#5a6460]" />
                <svg width="48" height="24" viewBox="0 0 48 24">
                    <ellipse cx="11" cy="10" rx="11" ry="7.500" transform="rotate(-40 11 10)" fill="#e9a96a" />
                    <ellipse cx="13" cy="7" rx="7" ry="5.500" transform="rotate(-40 13 7)" fill="#f7d29c" />
                    <path d="M5 7c4-1 9 2 11 6l-3 2c-2-3-5-5-9-5z" fill="#d8385e" />
                    <path d="m11 13 6 8M6 15l4 5M14 18l8 3M18 17l-2 6" stroke="#e0567a" strokeWidth="2" />
                    <ellipse cx="36" cy="19" rx="11" ry="4.500" fill="#8d7fb8" />
                    <path d="M28 3c2-3 14-3 16 0l-2 15c-2 2-10 2-12 0z" fill="#4a3b70" />
                    <ellipse cx="36" cy="3" rx="8" ry="2.200" fill="#7d6aa8" />
                    <path d="M30 14c4 2 8 2 12 0v4c-4 2-8 2-12 0z" fill="#bdb2dc" />
                </svg>
            </div>
            <TaskIcon label="任务视图">
                <svg width="24" height="22" viewBox="0 0 24 22">
                    <path d="M0 6h17v16H0z" fill="#2b2b2b" />
                    <path d="M6 0h18v16H6z" fill="#f6f6f6" />
                    <path d="M6 6h11v10H6z" fill="#b9b9b9" />
                </svg>
            </TaskIcon>
            <TaskIcon label="文件资源管理器" running>
                <svg width="24" height="22" viewBox="0 0 24 22">
                    <path d="M0 1.500C0 .7.700 0 1.500 0H9l3 3H0z" fill="#d99a17" />
                    <path d="M0 5h8l3-3h13v18a1.500 1.500 0 0 1-1.500 1.500h-21A1.500 1.500 0 0 1 0 20z" fill="#ffca3e" />
                    <path d="M4 21.500V17a2.500 2.500 0 0 1 2.500-2.500h11A2.500 2.500 0 0 1 20 17v4.500z" fill="#1a7fd4" />
                    <path d="M8 18h8v2H8z" fill="#0c5aa0" />
                </svg>
            </TaskIcon>
            <TaskIcon label="Edge" running>
                <svg width="24" height="24" viewBox="0 0 24 24">
                    <circle cx="12" cy="12" r="12" fill="#0f6cbd" />
                    <path d="M.3 10C2 3 7 0 12 0c7 0 12 4.500 12 10 0 4-3 6-6 6-2.500 0-3.500-1-2.500-2.500S16 8 11 7.500C6 7 2 8 .3 10" fill="#35c1d0" />
                    <path d="M14 .2c6 .8 10 5 10 9.800 0 4-3 6-6 6-2.500 0-3.500-1-2.500-2.500C18 10 18 4 14 .2" fill="#62d456" />
                    <path d="M9 11c-2 6 3 10.500 8 9.500 2-.3 4-1.500 5-2.500C17 26 6 25 4.500 17 4 12 7 9 11 9.500z" fill="#0b3f86" />
                    <path d="M13 10c2 .5 3 2 2.500 3.500S16 16 18 16c2 0 2.500-.5 4-1-1 4-6 5-9.500 3S9 11 13 10" fill="#c9ecdf" />
                </svg>
            </TaskIcon>
            <TaskIcon label="Microsoft Store">
                <svg width="23" height="24" viewBox="0 0 23 24">
                    <path d="M6.500 6V2.500A1.500 1.500 0 0 1 8 1h7a1.500 1.500 0 0 1 1.500 1.500V6" fill="none" stroke="#3cc4fb" strokeWidth="2" />
                    <path d="M0 5.500h23V20a3 3 0 0 1-3 3H3a3 3 0 0 1-3-3z" fill="#1c4f91" />
                    <path d="M7 9h4v4H7z" fill="#f25022" />
                    <path d="M12 9h4v4h-4z" fill="#7fba00" />
                    <path d="M7 14h4v4H7z" fill="#00a4ef" />
                    <path d="M12 14h4v4h-4z" fill="#ffb900" />
                </svg>
            </TaskIcon>
            <TaskIcon label="计算器" running>
                <svg width="18" height="24" viewBox="0 0 18 24">
                    <rect width="18" height="24" rx="1.500" fill="#6b7580" />
                    <path d="M2 2.500h14v4H2z" fill="#41c9f2" />
                    <path d="M2 9h4v3.500H2zM7 9h4v3.500H7zM12 9h4v3.500h-4zM2 13.500h4V17H2zM7 13.500h4V17H7zM2 18.500h4V22H2zM7 18.500h4V22H7z" fill="#d5dbe4" />
                    <path d="M12 13.500h4V22h-4z" fill="#14508f" />
                </svg>
            </TaskIcon>
            <TaskIcon label="微信" running>
                <svg width="25" height="21" viewBox="0 0 25 21">
                    <path d="M8.500 0C13 0 17 3 17 7s-4 7-8.500 7c-1 0-2-.2-3-.5L2 15.500l1-3.500C1 11 0 9 0 7c0-4 4-7 8.500-7" fill="#14d069" />
                    <path d="M17.500 6.500c4 0 7.500 2.800 7.500 6.500 0 2-1 3.700-2.500 5l.5 3-3-1.500c-5 1-9.500-2-9.500-6.500 0-3.700 3-6.500 7-6.500" fill="#ececec" />
                    <circle cx="6" cy="5" r="1" fill="#0a7a3c" />
                    <circle cx="11.500" cy="5" r="1" fill="#0a7a3c" />
                    <circle cx="15.500" cy="11" r=".9" fill="#777777" />
                    <circle cx="20" cy="11" r=".9" fill="#777777" />
                </svg>
            </TaskIcon>
            <TaskIcon label="Chrome" running>
                <svg width="24" height="24" viewBox="0 0 24 24">
                    <circle cx="12" cy="12" r="12" fill="#fbc116" />
                    <path d="M1.600 6a12 12 0 0 1 20.800 0H12a6 6 0 0 0-5.200 9z" fill="#e33b2e" />
                    <path d="M1.600 6A12 12 0 0 0 12 24l5.200-9A6 6 0 0 1 6.800 15z" fill="#229a44" />
                    <circle cx="12" cy="12" r="6" fill="white" />
                    <circle cx="12" cy="12" r="4.700" fill="#2f7de9" />
                </svg>
            </TaskIcon>
            <TaskIcon label="收银" running>
                <svg width="24" height="24" viewBox="0 0 24 24">
                    <rect width="24" height="24" rx="1.500" fill="#2a5cff" />
                    <path d="m7 4 5 5 5-5M5.500 9.500h13M5.500 14.500h13M12 9v11" stroke="#c9ecdf" strokeWidth="2" fill="none" />
                </svg>
            </TaskIcon>
            <TaskIcon label="Excel" running active>
                <svg width="23" height="24" viewBox="0 0 23 24">
                    <path d="M12.500 3.500h10v17h-10z" fill="white" stroke="#217346" />
                    <path d="M14 6.500h7M14 9.500h7M14 12.500h7M14 15.500h7M17.500 5v13" stroke="#217346" strokeWidth="1.300" />
                    <path d="M0 2.500 14 0v24L0 21.500z" fill="#1d6f42" />
                    <path d="m4 8 6 8M10 8l-6 8" stroke="white" strokeWidth="2" />
                </svg>
            </TaskIcon>
        </div>
        <div className="flex items-center justify-end pr-[18px] pb-[2px]">
            <button aria-label="显示隐藏的图标" className="mr-[18px]">
                <svg width="11" height="7" fill="none" stroke="#1a1a1a" strokeWidth="1.600"><path d="m1 6 4.500-5L10 6" /></svg>
            </button>
            <button aria-label="更新" className="mr-[15px]">
                <svg width="17" height="17" viewBox="0 0 17 17" fill="none" stroke="#1a1a1a" strokeWidth="1.500">
                    <path d="M1 7c1-6.500 10.500-8 13.500-2M15 1v4.500h-4M7 15.500c-2-.3-4-2-5-4M1.500 16v-4.500H6" />
                    <circle cx="12.500" cy="12.500" r="4" fill="#0078d4" stroke="none" />
                </svg>
            </button>
            <button className="mr-6 text-[15px]">中</button>
            <button className="mr-[22px] text-[15px]">拼</button>
            <button aria-label="网络" className="mr-2">
                <svg width="17" height="17" viewBox="0 0 17 17" fill="none" stroke="#1a1a1a" strokeWidth="1.300">
                    <path d="M9.500 1.500H1v11h11V9.500M4 16h7M6 13v3M9 13v3" />
                    <rect x="11.500" y="1" width="4.500" height="5" rx="1.500" />
                    <path d="M13.700 6v10" />
                </svg>
            </button>
            <button aria-label="音量" className="mr-[14px]">
                <svg width="17" height="14" viewBox="0 0 17 14" fill="none" stroke="#1a1a1a" strokeWidth="1.200">
                    <path d="M.7 4.800h2.800L7.500 1v12L3.500 9.200H.7zM9.500 4.500a3.500 3.500 0 0 1 0 5M11.500 2.500a6 6 0 0 1 0 9M13.500.8a8.500 8.500 0 0 1 0 12.400" />
                </svg>
            </button>
            <div className="text-right leading-4">
                15:11
                <br />
                2025/12/16
            </div>
        </div>
    </footer>
);

const App = () => (
    <div className="flex h-screen flex-col overflow-hidden text-xs [font-family:'Open_Sans','Noto_Sans_CJK_SC',sans-serif]">
        <header className="shrink-0 bg-[#217346]">
            <TitleBar />
            <RibbonTabs />
        </header>
        <Ribbon />
        <FormulaBar />
        <main className="flex min-h-0 flex-1 bg-[#e6e6e6]">
            <Worksheet />
            <VerticalScroll />
        </main>
        <SheetTabs />
        <StatusBar />
        <Taskbar />
    </div>
);

export default App;
